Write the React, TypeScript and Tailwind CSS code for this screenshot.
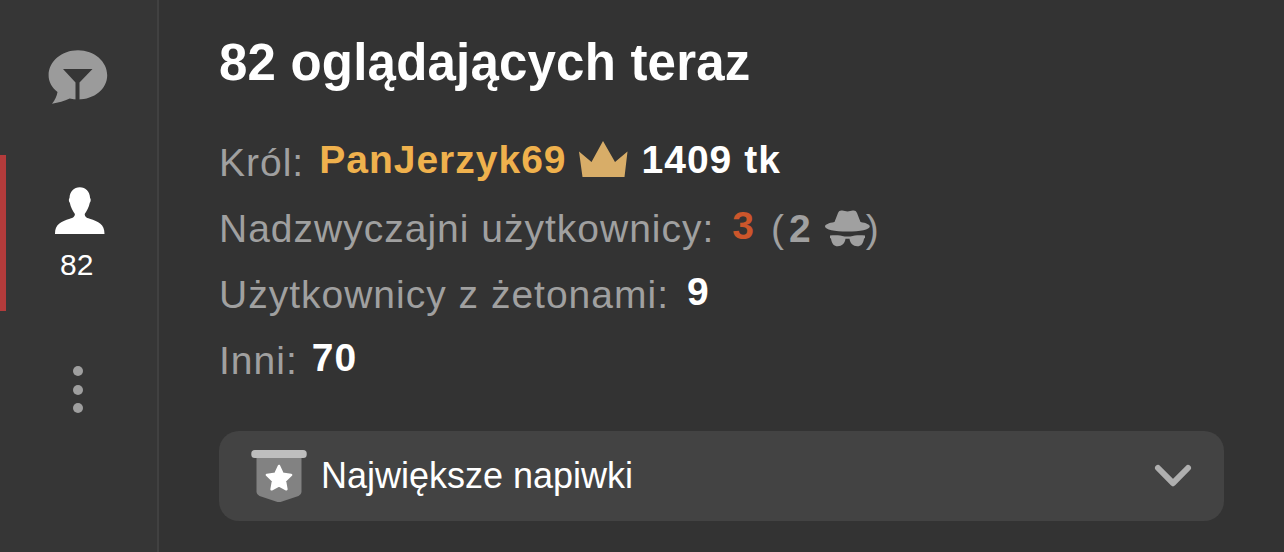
import React from 'react';

const ChatFilterIcon = () => (
  <svg className="w-[60px] h-[56px]" viewBox="48 49 60 56" fill="none">
    <path
      d="M78 50.2C61.8 50.2 48.6 61.4 48.6 75.2c0 6.500 3.300 12.400 8.900 16.800-.6 4.200-2.500 8-5.500 11.700 6.500-1 12.200-2.700 17.700-5.200 2.700.7 5.500.9 8.300.9C94.300 99.400 107.200 88.900 107.200 75.200S94.300 50.200 78 50.200Z"
      fill="#9b9b9b"
    />
    <path d="M63 69h29.500L79.500 82.500V100h-4V82.500Z" fill="#363636" />
  </svg>
);

const UserIcon = () => (
  <svg className="w-[50px] h-[48px]" viewBox="0 0 50 48" fill="#fff">
    <path d="M24.800.2c6 0 9.900 4.200 10.300 10.700 1 .8.8 3.500-.3 4.900-.8 4.700-3.200 8.500-5.100 11.200.2 2.600 1.300 3.600 5 4.800C43.500 34.800 49.500 37 49.500 47H0C0 37 6 34.800 14.800 31.800c3.700-1.200 4.900-2.200 5.100-4.800-1.900-2.700-4.300-6.500-5.100-11.200-1.100-1.400-1.300-4.100-.3-4.900C14.900 4.400 18.800.2 24.800.2Z" />
  </svg>
);

const CrownIcon = () => (
  <svg className="w-[49px] h-[37px]" viewBox="0 0 49 37" fill="#d8ad68">
    <path d="M0 10.500l12.500 10.500L24 0l12 21L48.500 10.500 45.500 36H3.500Z" />
  </svg>
);

const IncognitoIcon = () => (
  <svg className="w-[46px] h-[37px]" viewBox="825 210 46 37" fill="#a0a0a0">
    <path d="M834.500 222 838 213c.8-2 2.300-2.800 4.300-2.400l5.200 1 5.200-1c2-.4 3.500.4 4.300 2.400l3.500 9c5.700 1 9.300 2.500 9.300 4.500 0 3-9.500 5-22.300 5S825 229.500 825 226.500c0-2 3.800-3.500 9.500-4.500Z" />
    <path d="M830 235.500c5.500-.6 10.500-.3 14.500 1h6c4-1.300 9-1.600 14.500-1v2.200l-1 1c-.8 5-3 7.500-6.700 7.500-4.300 0-7-2.600-7.800-7.400h-4c-.8 4.800-3.500 7.400-7.800 7.400-3.700 0-5.900-2.500-6.700-7.500l-1-1Z" />
  </svg>
);

const BadgeIcon = () => (
  <svg className="w-[56px] h-[54px]" viewBox="251 450 56 54">
    <path d="M256.500 456h45v37q0 2.500-3 4l-16.500 5.500q-3 1-6 0l-16.500-5.500q-3-1.500-3-4Z" fill="#828282" />
    <rect x="251.300" y="451" width="55.400" height="8" rx="3.500" fill="#bebebe" />
    <path
      d="M279 467l3.600 7.800 8.500 1.100-6.200 5.900 1.500 8.500-7.400-4-7.400 4 1.500-8.500-6.200-5.900 8.500-1.100Z"
      fill="#fff"
      stroke="#fff"
      strokeWidth="2.500"
      strokeLinejoin="round"
    />
  </svg>
);

const ChevronIcon = () => (
  <svg className="w-[38px] h-[24px]" viewBox="0 0 38 24" fill="none">
    <path d="M4 4l15 15.200L34 4" stroke="#afafaf" strokeWidth="6" strokeLinecap="round" strokeLinejoin="round" />
  </svg>
);

const Row: React.FC<{ label: string; children: React.ReactNode }> = ({ label, children }) => (
  <div className="flex h-[66px] items-center whitespace-nowrap">
    <span className="text-[#a0a0a0]">{label}</span>
    {children}
  </div>
);

const App: React.FC = () => {
  return (
    <div className="flex w-[1284px] h-[552px] overflow-hidden bg-[#333333] font-['Liberation_Sans',Arial,sans-serif]">
      <aside className="flex w-[159px] shrink-0 flex-col border-r-2 border-[#414141] bg-[#363636]">
        <div className="flex h-[155px] pt-[49px] pl-[48px]">
          <ChatFilterIcon />
        </div>
        <div className="h-[156px] border-l-[6px] border-[#b33b3b] pt-[32px] pl-[49px]">
          <UserIcon />
          <p className="ml-[5px] mt-[14px] text-[30px] leading-[32px] text-white">82</p>
        </div>
        <div className="flex flex-col gap-[8.500px] pt-[55px] pl-[73px]">
          <span className="size-[10px] rounded-full bg-[#9f9f9f]" />
          <span className="size-[10px] rounded-full bg-[#9f9f9f]" />
          <span className="size-[10px] rounded-full bg-[#9f9f9f]" />
        </div>
      </aside>

      <main className="flex-1 pt-[33px] pl-[60px] pr-[60px]">
        <h1 className="h-[97px] text-[51px] leading-[60px] tracking-[0.2px] font-bold text-white">82 oglądających teraz</h1>

        <div className="text-[39px] leading-[44px] tracking-[1px]">
          <Row label="Król:">
            <span className="ml-[15px] pb-[6px] font-bold text-[#efb14d]">PanJerzyk69</span>
            <span className="ml-[12px] pb-[8px]"><CrownIcon /></span>
            <span className="ml-[14px] pb-[6px] font-bold text-white">1409 tk</span>
          </Row>
          <Row label="Nadzwyczajni użytkownicy:">
            <span className="ml-[18px] pb-[6px] font-bold text-[#cb562b]">3</span>
            <span className="ml-[16px] text-[#a0a0a0]">(<b className="ml-[4px]">2</b></span>
            <span className="ml-[13px] pb-[2px]"><IncognitoIcon /></span>
            <span className="-ml-[5px] text-[#a0a0a0]">)</span>
          </Row>
          <Row label="Użytkownicy z żetonami:">
            <span className="ml-[18px] pb-[6px] font-bold text-white">9</span>
          </Row>
          <Row label="Inni:">
            <span className="ml-[14px] pb-[6px] font-bold text-white">70</span>
          </Row>
        </div>

        <button className="mt-[37px] flex h-[90px] w-[1005px] items-center rounded-[20px] bg-[#434343] pl-[32px] pr-[32px] text-white">
          <BadgeIcon />
          <span className="ml-[14px] text-[36px] leading-[44px]">Największe napiwki</span>
          <span className="ml-auto"><ChevronIcon /></span>
        </button>
      </main>
    </div>
  );
};

export default App;
